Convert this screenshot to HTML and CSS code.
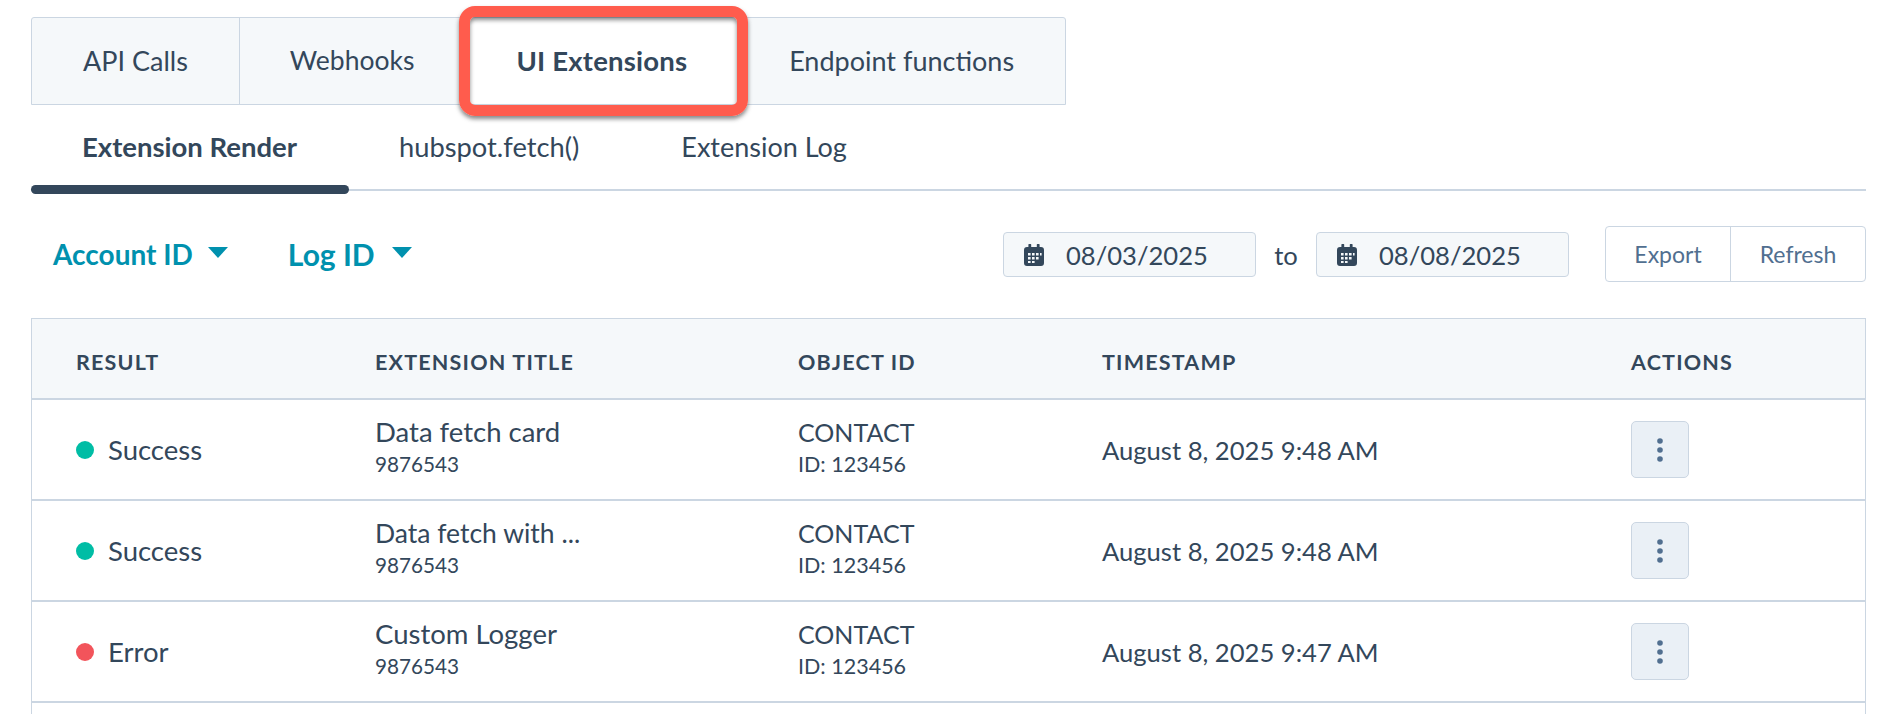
FILE: index.html
```html
<!DOCTYPE html>
<html lang="en">
<head>
<meta charset="utf-8">
<title>UI Extensions logs</title>
<link rel="stylesheet" href="styles.css">
</head>
<body>
<svg class="defs" width="0" height="0" aria-hidden="true">
  <symbol id="cal" viewBox="0 0 20 22">
    <path fill="#33475b" d="M5 0h1.6a.6.6 0 0 1 .6.6V3h5.6V.6a.6.6 0 0 1 .6-.6H15a.6.6 0 0 1 .6.6V3h1.4A3 3 0 0 1 20 6v13a3 3 0 0 1-3 3H3a3 3 0 0 1-3-3V6a3 3 0 0 1 3-3h1.4V.6A.6.6 0 0 1 5 0z"/>
    <path fill="#f5f8fa" d="M4 9h2.6v2.4H4zM8 9h2.6v2.4H8zM12 9h2.6v2.4H12zM16 9h1.6v2.4H16zM4 13h2.6v2.4H4zM8 13h2.6v2.4H8zM12 13h2.6v2.4H12zM4 17h2.6v2H4zM8 17h2.6v2H8z"/>
  </symbol>
  <symbol id="kebab" viewBox="0 0 6 24">
    <circle cx="3" cy="3" r="2.8" fill="#516f90"/>
    <circle cx="3" cy="12" r="2.8" fill="#516f90"/>
    <circle cx="3" cy="21" r="2.8" fill="#516f90"/>
  </symbol>
</svg>

<main class="page">
  <nav class="tabs">
    <a class="tab">API Calls</a>
    <a class="tab tab-webhooks">Webhooks</a>
    <a class="tab tab-active">UI Extensions</a>
    <a class="tab tab-last">Endpoint functions</a>
  </nav>

  <nav class="subtabs">
    <a class="subtab subtab-active">Extension Render</a>
    <a class="subtab subtab-fetch">hubspot.fetch()</a>
    <a class="subtab">Extension Log</a>
  </nav>

  <section class="toolbar">
    <div class="filters">
      <button class="filter">Account ID<span class="caret"></span></button>
      <button class="filter filter-log">Log ID<span class="caret"></span></button>
    </div>
    <div class="range">
      <div class="date"><svg class="cal"><use href="#cal"/></svg><span>08/03/2025</span></div>
      <span class="to">to</span>
      <div class="date"><svg class="cal"><use href="#cal"/></svg><span>08/08/2025</span></div>
    </div>
    <div class="btn-group">
      <button class="btn">Export</button>
      <button class="btn">Refresh</button>
    </div>
  </section>

  <section class="table">
    <div class="row head">
      <div>RESULT</div><div>EXTENSION TITLE</div><div>OBJECT ID</div><div>TIMESTAMP</div><div>ACTIONS</div>
    </div>
    <div class="row">
      <div class="status"><i class="dot ok"></i>Success</div>
      <div class="stack"><b>Data fetch card</b><small>9876543</small></div>
      <div class="stack obj"><b>CONTACT</b><small>ID: 123456</small></div>
      <div class="ts">August 8, 2025 9:48 AM</div>
      <div><button class="more"><svg class="kebab"><use href="#kebab"/></svg></button></div>
    </div>
    <div class="row">
      <div class="status"><i class="dot ok"></i>Success</div>
      <div class="stack"><b class="clipped">Data fetch with ...</b><small>9876543</small></div>
      <div class="stack obj"><b>CONTACT</b><small>ID: 123456</small></div>
      <div class="ts">August 8, 2025 9:48 AM</div>
      <div><button class="more"><svg class="kebab"><use href="#kebab"/></svg></button></div>
    </div>
    <div class="row">
      <div class="status"><i class="dot err"></i>Error</div>
      <div class="stack"><b>Custom Logger</b><small>9876543</small></div>
      <div class="stack obj"><b>CONTACT</b><small>ID: 123456</small></div>
      <div class="ts">August 8, 2025 9:47 AM</div>
      <div><button class="more"><svg class="kebab"><use href="#kebab"/></svg></button></div>
    </div>
    <div class="row-tail"></div>
  </section>
</main>
</body>
</html>
```
FILE: styles.css
```css
* { box-sizing: border-box; }
html, body { margin: 0; height: 714px; overflow: hidden; background: #fff; }
body { font-family: "Lato", "Noto Sans", sans-serif; color: #33475b; font-size: 25.6px; }
button { font: inherit; color: inherit; background: none; border: 0; padding: 0; }
.defs { position: absolute; }

.page { width: 1866px; padding: 17px 0 0 31px; }

.tabs {
  display: flex;
  width: 1035px;
  height: 88px;
  background: #f5f8fa;
  border: 1px solid #cbd6e2;
  border-radius: 3px 3px 0 0;
}
.tab {
  display: flex;
  align-items: center;
  justify-content: center;
  padding: 0 51px 2px;
  border-right: 1px solid #cbd6e2;
  font-size: 27px;
  white-space: nowrap;
}
.tab-webhooks { font-size: 26.5px; padding: 0 50px 2px; }
.tab-last { border-right: 0; flex: 1; padding: 0 0 2px; }
.tab-active {
  position: relative;
  background: #fff;
  font-weight: 700;
  font-size: 27.5px;
  border-right: 0;
  letter-spacing: .2px;
}
.tab-active::after {
  content: "";
  position: absolute;
  inset: -12px -10px -12px -6px;
  border: 11px solid #ff5c4d;
  border-radius: 16px;
  box-shadow: 0 3px 4px rgba(40, 40, 40, .55), inset 0 3px 4px rgba(40, 40, 40, .55);
}

.subtabs {
  display: flex;
  height: 86px;
  border-bottom: 2px solid #cbd6e2;
}
.subtab {
  position: relative;
  display: flex;
  align-items: center;
  padding: 0 50px 2px;
  font-size: 27px;
}
.subtab-fetch { font-size: 27.3px; padding-right: 52px; }
.subtab-active { font-weight: 700; width: 318px; padding-left: 51px; padding-right: 0; font-size: 27.5px; }
.subtab-active::after {
  content: "";
  position: absolute;
  left: 0;
  right: 0;
  bottom: -5px;
  height: 9px;
  background: #33475b;
  border-radius: 5px;
}

.toolbar {
  display: flex;
  align-items: center;
  height: 91px;
  margin-top: 17px;
}
.filters { display: flex; gap: 60px; padding-left: 22px; }
.filter {
  display: flex;
  align-items: center;
  gap: 15px;
  color: #0091ae;
  font-weight: 700;
  font-size: 28px;
}
.filter-log { font-size: 30px; gap: 17px; }
.caret {
  width: 0;
  height: 0;
  border-left: 10px solid transparent;
  border-right: 10px solid transparent;
  border-top: 11px solid #0091ae;
  margin-top: -2px;
}
.range { display: flex; align-items: center; margin-left: auto; margin-top: 2px; }
.date {
  display: flex;
  align-items: center;
  gap: 22px;
  width: 253px;
  height: 45px;
  padding-left: 20px;
  background: #f5f8fa;
  border: 1px solid #cbd6e2;
  border-radius: 4px;
}
.cal { width: 20px; height: 22px; }
.to { width: 60px; text-align: center; }
.btn-group {
  display: flex;
  height: 56px;
  width: 261px;
  margin-left: 36px;
  border: 1px solid #cbd6e2;
  border-radius: 4px;
}
.btn { color: #516f90; font-size: 23px; flex: 0 0 124px; }
.btn + .btn { flex: 1; border-left: 1px solid #cbd6e2; }

.table {
  margin-top: 19px;
  border: 1px solid #cbd6e2;
  border-bottom: 0;
  height: 420px;
}
.row {
  display: grid;
  grid-template-columns: 299px 423px 304px 529px 1fr;
  align-items: center;
  height: 101px;
  padding-left: 44px;
  border-bottom: 2px solid #cbd6e2;
}
.head {
  height: 81px;
  padding-top: 7px;
  background: #f5f8fa;
  font-size: 21.5px;
  font-weight: 700;
  letter-spacing: 1.2px;
}
.status { display: flex; align-items: center; gap: 14px; font-size: 27.5px; }
.dot { width: 18px; height: 18px; border-radius: 50%; }
.ok { background: #00bda5; }
.err { background: #f2545b; }
.stack { display: flex; flex-direction: column; line-height: 32px; padding-bottom: 3px; }
.stack b { font-weight: 400; font-size: 27.5px; }
.stack .clipped { font-size: 26.5px; }
.stack small { font-size: 20.7px; line-height: 32px; }
.stack.obj b { font-size: 25px; }
.obj small { font-size: 21.5px; }
.ts { font-size: 25.6px; }
.more {
  display: flex;
  align-items: center;
  justify-content: center;
  width: 58px;
  height: 57px;
  background: #eaf0f6;
  border: 1px solid #cbd6e2;
  border-radius: 5px;
}
.kebab { width: 6px; height: 24px; }
```
